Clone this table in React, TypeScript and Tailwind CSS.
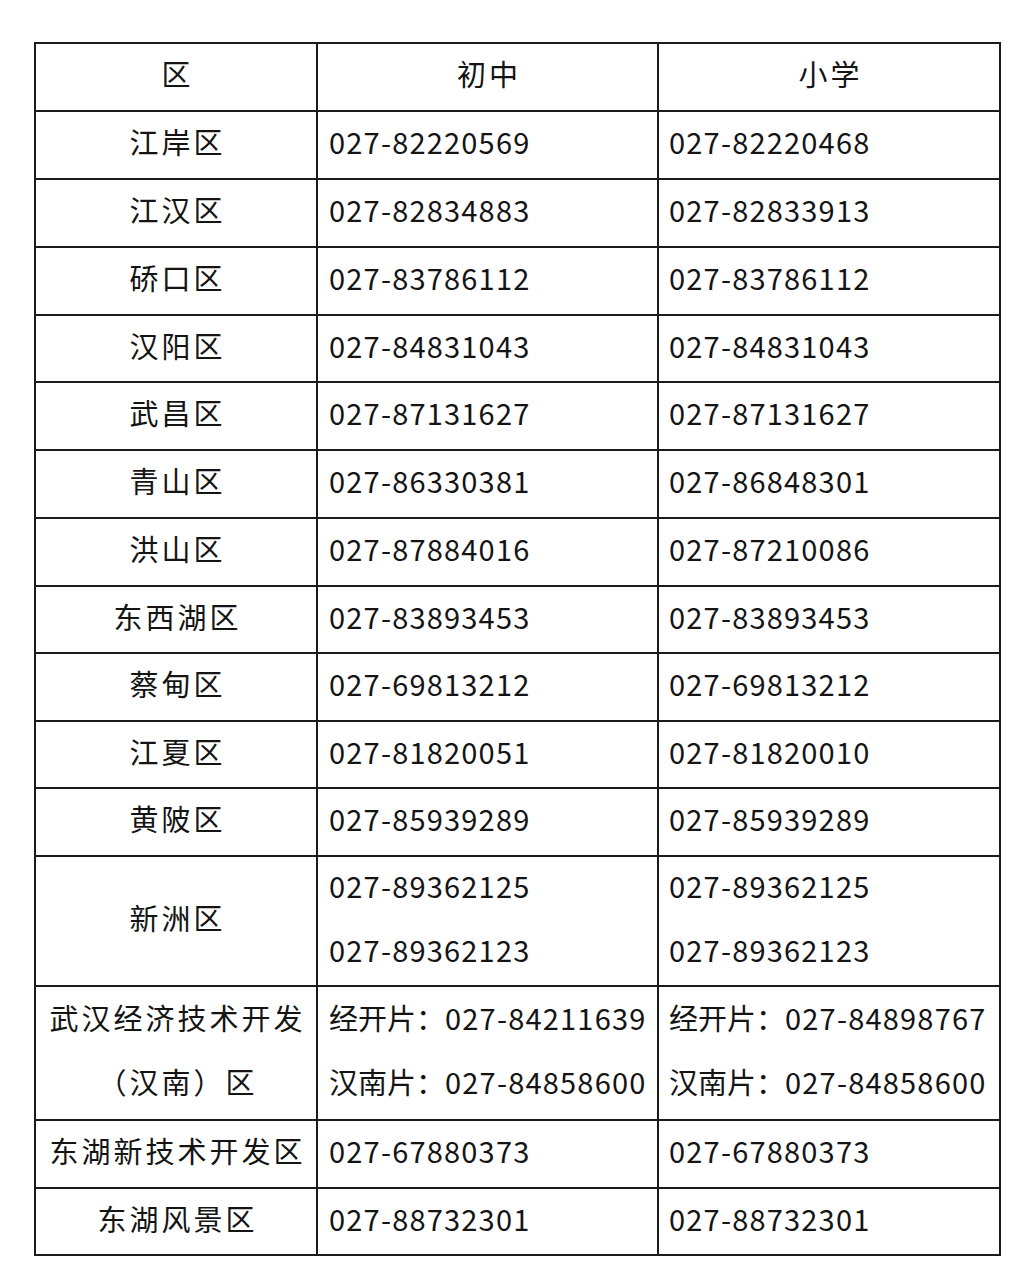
import React from "react";

type Row = { d: string[]; a: string[]; b: string[]; h: string };

const rows: Row[] = [
  { d: ["江岸区"], a: ["027-82220569"], b: ["027-82220468"], h: "h-[66px]" },
  { d: ["江汉区"], a: ["027-82834883"], b: ["027-82833913"], h: "h-[66px]" },
  { d: ["硚口区"], a: ["027-83786112"], b: ["027-83786112"], h: "h-[66px]" },
  { d: ["汉阳区"], a: ["027-84831043"], b: ["027-84831043"], h: "h-[65px]" },
  { d: ["武昌区"], a: ["027-87131627"], b: ["027-87131627"], h: "h-[66px]" },
  { d: ["青山区"], a: ["027-86330381"], b: ["027-86848301"], h: "h-[66px]" },
  { d: ["洪山区"], a: ["027-87884016"], b: ["027-87210086"], h: "h-[66px]" },
  { d: ["东西湖区"], a: ["027-83893453"], b: ["027-83893453"], h: "h-[65px]" },
  { d: ["蔡甸区"], a: ["027-69813212"], b: ["027-69813212"], h: "h-[66px]" },
  { d: ["江夏区"], a: ["027-81820051"], b: ["027-81820010"], h: "h-[65px]" },
  { d: ["黄陂区"], a: ["027-85939289"], b: ["027-85939289"], h: "h-[66px]" },
  { d: ["新洲区"], a: ["027-89362125", "027-89362123"], b: ["027-89362125", "027-89362123"], h: "h-[128px]" },
  {
    d: ["武汉经济技术开发", "（汉南）区"],
    a: ["经开片：|027-84211639", "汉南片：|027-84858600"],
    b: ["经开片：|027-84898767", "汉南片：|027-84858600"],
    h: "h-[132px]",
  },
  { d: ["东湖新技术开发区"], a: ["027-67880373"], b: ["027-67880373"], h: "h-[66px]" },
  { d: ["东湖风景区"], a: ["027-88732301"], b: ["027-88732301"], h: "h-[65px]" },
];

function Lines({ items, center }: { items: string[]; center?: boolean }) {
  return (
    <div
      className={
        center
          ? "flex -translate-y-[4px] flex-col items-center"
          : "flex -translate-y-[4px] flex-col items-start"
      }
    >
      {items.map((t, i) => {
        if (center) {
          return (
            <div key={i} className="leading-[64px] tracking-[3px] pl-[3px] whitespace-nowrap">
              {t}
            </div>
          );
        }
        const parts = t.split("|");
        return (
          <div key={i} className="leading-[64px] whitespace-nowrap">
            {parts.length > 1 ? <span className="tracking-normal">{parts[0]}</span> : null}
            <span className="tracking-[1.2px]">{parts[parts.length - 1]}</span>
          </div>
        );
      })}
    </div>
  );
}

export default function App() {
  return (
    <div className="min-h-[1280px] w-[1025px] bg-white pt-[42px] pl-[34px]">
      <div
        className="grid w-[967px] grid-cols-[280px_339px_340px] gap-[2px] bg-[#1c1c1c] p-[2px] text-[29px] text-[#141414]"
        style={{ fontFamily: '"Noto Sans CJK SC", "Noto Sans", sans-serif' }}
      >
        <div className="flex h-[66px] items-center justify-center bg-white">
          <Lines items={["区"]} center />
        </div>
        <div className="flex h-[66px] items-center justify-center bg-white">
          <Lines items={["初中"]} center />
        </div>
        <div className="flex h-[66px] items-center justify-center bg-white">
          <Lines items={["小学"]} center />
        </div>
        {rows.map((r, i) => (
          <React.Fragment key={i}>
            <div className={`${r.h} flex items-center justify-center bg-white`}>
              <Lines items={r.d} center />
            </div>
            <div className={`${r.h} flex items-center bg-white pl-[11px]`}>
              <Lines items={r.a} />
            </div>
            <div className={`${r.h} flex items-center bg-white pl-[10px]`}>
              <Lines items={r.b} />
            </div>
          </React.Fragment>
        ))}
      </div>
    </div>
  );
}
